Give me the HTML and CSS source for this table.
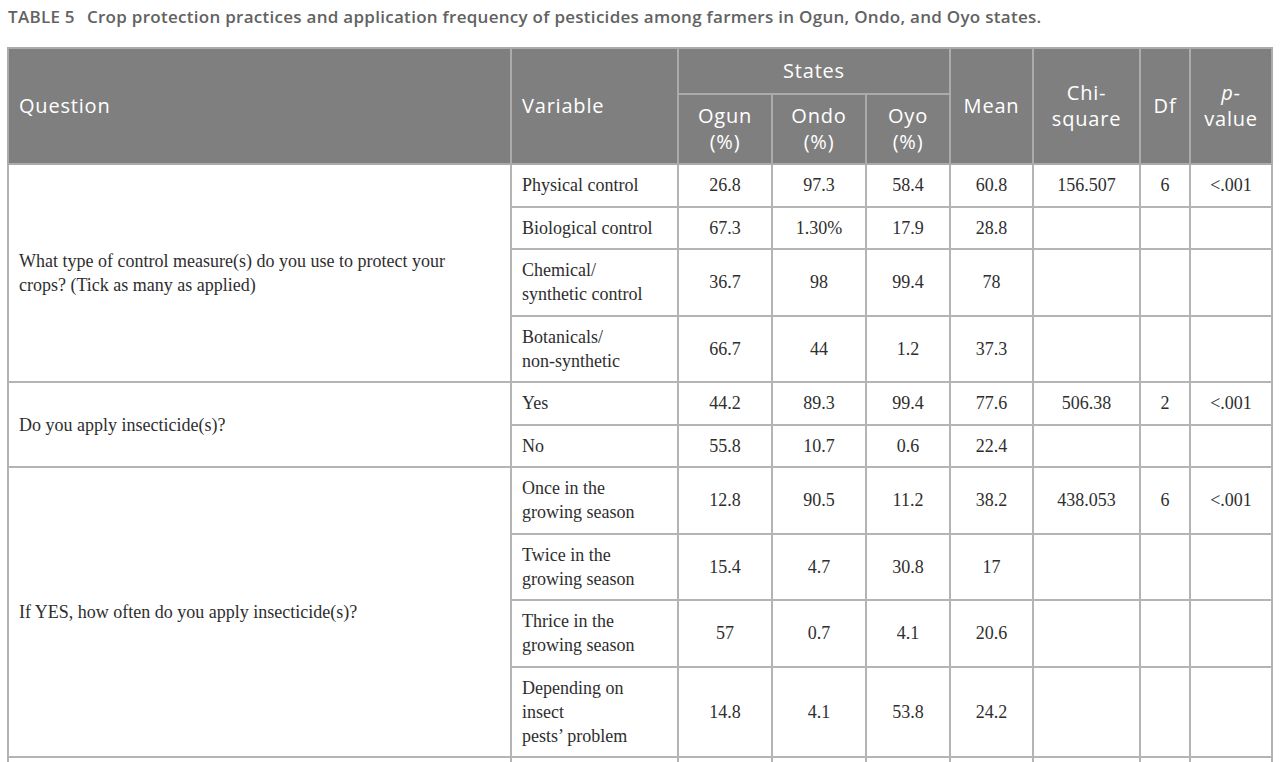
FILE: index.html
```html
<!DOCTYPE html>
<html lang="en">
<head>
<meta charset="utf-8">
<title>Table 5</title>
<link rel="stylesheet" href="styles.css">
</head>
<body>
<div class="page">
  <p class="caption"><span class="label">TABLE 5</span>Crop protection practices and application frequency of pesticides among farmers in Ogun, Ondo, and Oyo states.</p>
  <table class="data">
    <colgroup>
      <col class="c-q"><col class="c-var"><col class="c-ogun"><col class="c-ondo"><col class="c-oyo"><col class="c-mean"><col class="c-chi"><col class="c-df"><col class="c-p">
    </colgroup>
    <thead>
      <tr class="h1">
        <th rowspan="2" class="left">Question</th>
        <th rowspan="2" class="left">Variable</th>
        <th colspan="3">States</th>
        <th rowspan="2">Mean</th>
        <th rowspan="2">Chi-<br>square</th>
        <th rowspan="2">Df</th>
        <th rowspan="2"><i>p</i>-<br>value</th>
      </tr>
      <tr class="h2">
        <th>Ogun<br>(%)</th>
        <th>Ondo<br>(%)</th>
        <th>Oyo<br>(%)</th>
      </tr>
    </thead>
    <tbody>
      <tr>
        <td rowspan="4" class="q">What type of control measure(s) do you use to protect your<br>crops? (Tick as many as applied)</td>
        <td class="var">Physical control</td>
        <td>26.8</td><td>97.3</td><td>58.4</td><td>60.8</td><td>156.507</td><td>6</td><td>&lt;.001</td>
      </tr>
      <tr>
        <td class="var">Biological control</td>
        <td>67.3</td><td>1.30%</td><td>17.9</td><td>28.8</td><td></td><td></td><td></td>
      </tr>
      <tr>
        <td class="var">Chemical/<br>synthetic control</td>
        <td>36.7</td><td>98</td><td>99.4</td><td>78</td><td></td><td></td><td></td>
      </tr>
      <tr>
        <td class="var">Botanicals/<br>non-synthetic</td>
        <td>66.7</td><td>44</td><td>1.2</td><td>37.3</td><td></td><td></td><td></td>
      </tr>
      <tr>
        <td rowspan="2" class="q">Do you apply insecticide(s)?</td>
        <td class="var">Yes</td>
        <td>44.2</td><td>89.3</td><td>99.4</td><td>77.6</td><td>506.38</td><td>2</td><td>&lt;.001</td>
      </tr>
      <tr>
        <td class="var">No</td>
        <td>55.8</td><td>10.7</td><td>0.6</td><td>22.4</td><td></td><td></td><td></td>
      </tr>
      <tr>
        <td rowspan="4" class="q">If YES, how often do you apply insecticide(s)?</td>
        <td class="var">Once in the<br>growing season</td>
        <td>12.8</td><td>90.5</td><td>11.2</td><td>38.2</td><td>438.053</td><td>6</td><td>&lt;.001</td>
      </tr>
      <tr>
        <td class="var">Twice in the<br>growing season</td>
        <td>15.4</td><td>4.7</td><td>30.8</td><td>17</td><td></td><td></td><td></td>
      </tr>
      <tr>
        <td class="var">Thrice in the<br>growing season</td>
        <td>57</td><td>0.7</td><td>4.1</td><td>20.6</td><td></td><td></td><td></td>
      </tr>
      <tr>
        <td class="var">Depending on<br>insect<br>pests’ problem</td>
        <td>14.8</td><td>4.1</td><td>53.8</td><td>24.2</td><td></td><td></td><td></td>
      </tr>
      <tr class="tail">
        <td class="q"></td><td class="var"></td><td></td><td></td><td></td><td></td><td></td><td></td><td></td>
      </tr>
    </tbody>
  </table>
</div>
</body>
</html>
```

FILE: styles.css
```css
html, body {
  margin: 0;
  padding: 0;
  background: #ffffff;
}

.page {
  padding: 5px 0 0 8px;
}

.caption {
  margin: 0 0 18px 0;
  font-family: "Open Sans", "Liberation Sans", sans-serif;
  font-weight: 600;
  font-size: 17px;
  line-height: 24px;
  letter-spacing: 0.28px;
  color: #626262;
  white-space: nowrap;
}

.caption .label {
  margin-right: 12px;
}

.data {
  margin-left: -1px;
  border-collapse: collapse;
  table-layout: fixed;
  width: 1264px;
}

.c-q { width: 503px; }
.c-var { width: 167px; }
.c-ogun { width: 94px; }
.c-ondo { width: 94px; }
.c-oyo { width: 84px; }
.c-mean { width: 83px; }
.c-chi { width: 107px; }
.c-df { width: 50px; }
.c-p { width: 82px; }

.data th {
  background: #7f7f7f;
  color: #ffffff;
  font-family: "Open Sans", "Liberation Sans", sans-serif;
  font-weight: 400;
  font-size: 20px;
  line-height: 26px;
  letter-spacing: 0.8px;
  text-align: center;
  vertical-align: middle;
  padding: 0 6px;
  border: 2px solid #ababab;
}

.data th.left {
  text-align: left;
  padding-left: 10px;
}

.data th i {
  font-style: italic;
}

.data .h1 { height: 46px; }
.data .h2 { height: 70px; }

.data td {
  font-family: "Liberation Serif", "Times New Roman", serif;
  font-size: 18px;
  line-height: 24px;
  color: #2e2e2e;
  text-align: center;
  vertical-align: middle;
  padding: 8.25px 8px;
  border: 2px solid #b4b4b4;
}

.data td.q,
.data td.var {
  text-align: left;
  padding-left: 10px;
  padding-right: 8px;
}

.data .tail td {
  height: 24px;
}
```
